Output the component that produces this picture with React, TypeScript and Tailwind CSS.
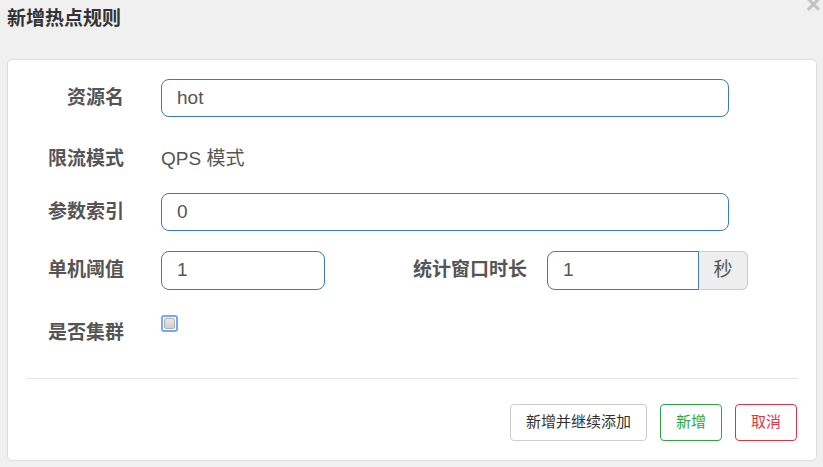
import React from 'react'

const font = { fontFamily: '"Liberation Sans", "Noto Sans CJK SC", sans-serif' }

function Label({ children }: { children: React.ReactNode }) {
  return (
    <div className="w-[116px] shrink-0 text-right text-[19px] font-bold text-[#555]">{children}</div>
  )
}

export default function App() {
  return (
    <div className="relative w-[823px] h-[467px] bg-[#f0f0f0] overflow-hidden" style={font}>
      <div className="absolute right-[2px] top-[-9px] text-[26px] font-bold leading-none text-[#c2c2c2]">×</div>

      <div className="h-[59px] pl-[7px] pt-[6px]">
        <h4 className="text-[19px] font-bold leading-[26px] text-[#333]">新增热点规则</h4>
      </div>

      <div className="ml-[7px] w-[810px] h-[402px] bg-white border border-[#dcdcdc] rounded-[5px] pt-[19px]">
        {/* 资源名 */}
        <div className="flex items-center h-[38px] mb-[19px]">
          <Label>资源名</Label>
          <div className="ml-[37px] w-[568px] h-[38px] border border-[#3a7bbf] rounded-[8px] flex items-center px-[15px] text-[19px] text-[#555]">
            hot
          </div>
        </div>

        {/* 限流模式 */}
        <div className="flex items-center h-[46px] mb-[11px]">
          <Label>限流模式</Label>
          <div className="ml-[37px] text-[19px] text-[#555]">QPS 模式</div>
        </div>

        {/* 参数索引 */}
        <div className="flex items-center h-[38px] mb-[20px]">
          <Label>参数索引</Label>
          <div className="ml-[37px] w-[568px] h-[38px] border border-[#3a7bbf] rounded-[8px] flex items-center px-[15px] text-[19px] text-[#555]">
            0
          </div>
        </div>

        {/* 单机阈值 / 统计窗口时长 */}
        <div className="flex items-center h-[39px] mb-[19px]">
          <Label>单机阈值</Label>
          <div className="ml-[37px] w-[164px] h-[39px] border border-[#3a7bbf] rounded-[8px] flex items-center px-[15px] text-[19px] text-[#555]">
            1
          </div>
          <div className="ml-[88px] text-[19px] font-bold text-[#555] whitespace-nowrap">统计窗口时长</div>
          <div className="ml-[20px] flex h-[39px]">
            <div className="w-[152px] border border-[#3a7bbf] rounded-l-[8px] flex items-center px-[15px] text-[19px] text-[#555]">
              1
            </div>
            <div className="w-[49px] bg-[#eee] border border-l-0 border-[#ccc] rounded-r-[6px] flex items-center justify-center text-[19px] text-[#555]">
              秒
            </div>
          </div>
        </div>

        {/* 是否集群 */}
        <div className="flex items-start h-[48px]">
          <div className="h-[48px] flex items-center">
            <Label>是否集群</Label>
          </div>
          <div className="ml-[37px] mt-[6px] w-[17px] h-[17px] rounded-[3px] border-2 border-[#7aa7ef] p-[1px]">
            <div className="w-full h-full rounded-[2px] bg-gradient-to-b from-[#e8e8e8] to-[#cfcfcf] border border-[#b0b0b0]" />
          </div>
        </div>

        <div className="mt-[21px] mx-[18px] h-px bg-[#e5e5e5]" />

        <div className="mt-[25px] mr-[19px] flex justify-end gap-[13px] text-[15px]">
          <button className="w-[137px] h-[37px] border border-[#ccc] rounded-[4px] text-[#333] bg-white">新增并继续添加</button>
          <button className="w-[62px] h-[37px] border border-[#28a745] rounded-[4px] text-[#28a745] bg-white">新增</button>
          <button className="w-[62px] h-[37px] border border-[#dc3545] rounded-[4px] text-[#dc3545] bg-white">取消</button>
        </div>
      </div>
    </div>
  )
}
